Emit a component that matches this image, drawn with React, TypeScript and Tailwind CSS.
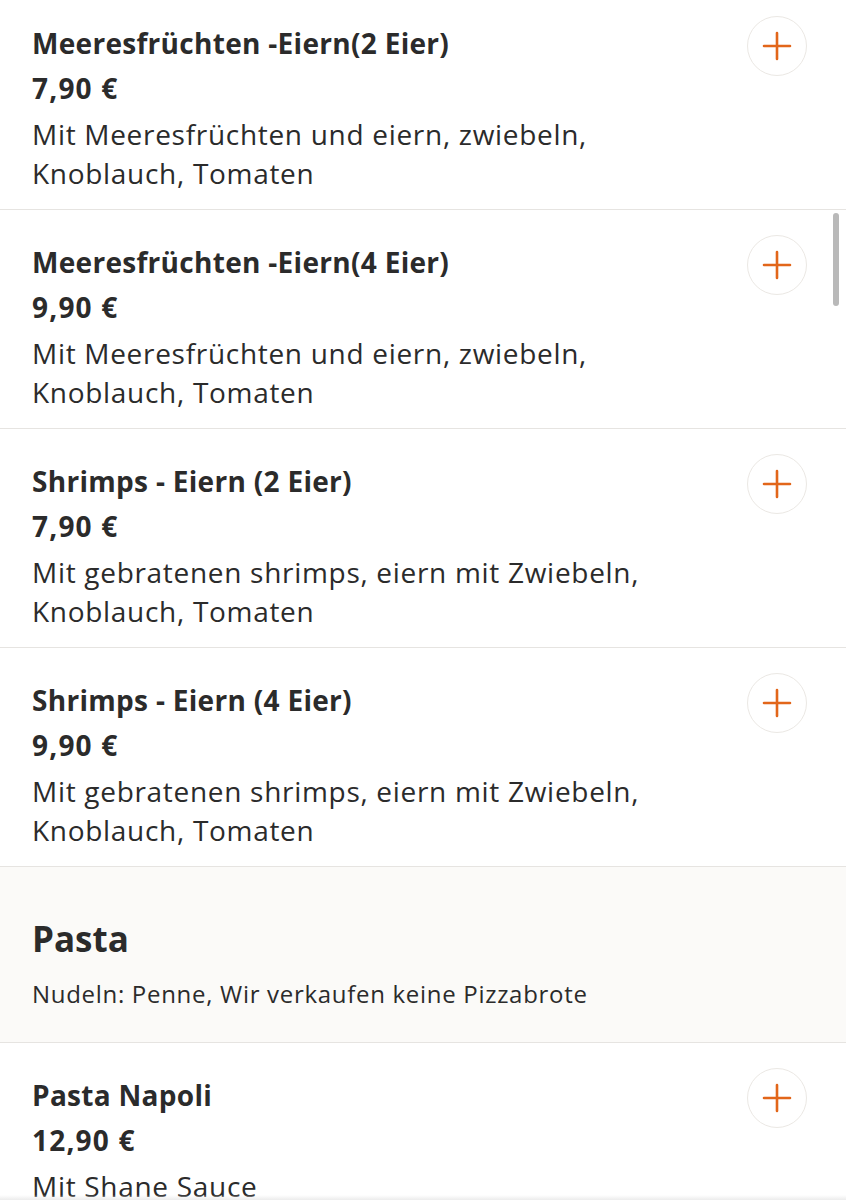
import React from 'react';

interface Item {
  name: string;
  price: string;
  desc: string[];
}

const eier: Item[] = [
  { name: 'Meeresfrüchten -Eiern(2 Eier)', price: '7,90 €', desc: ['Mit Meeresfrüchten und eiern, zwiebeln,', 'Knoblauch, Tomaten'] },
  { name: 'Meeresfrüchten -Eiern(4 Eier)', price: '9,90 €', desc: ['Mit Meeresfrüchten und eiern, zwiebeln,', 'Knoblauch, Tomaten'] },
  { name: 'Shrimps - Eiern (2 Eier)', price: '7,90 €', desc: ['Mit gebratenen shrimps, eiern mit Zwiebeln,', 'Knoblauch, Tomaten'] },
  { name: 'Shrimps - Eiern (4 Eier)', price: '9,90 €', desc: ['Mit gebratenen shrimps, eiern mit Zwiebeln,', 'Knoblauch, Tomaten'] },
];

const PlusButton: React.FC = () => (
  <button className="w-[60px] h-[60px] shrink-0 rounded-full border border-[#ebe8e4] bg-white flex items-center justify-center">
    <svg width="32" height="32" viewBox="0 0 32 32" fill="none">
      <path d="M16 3v26M3 16h26" stroke="#e2661a" strokeWidth="2.6" strokeLinecap="round" />
    </svg>
  </button>
);

const MenuItem: React.FC<{ item: Item }> = ({ item }) => (
  <div className="flex justify-between pl-8 pr-[39px] pt-[25px] pb-[16px] border-b border-[#e6e4e1]">
    <div className="flex flex-col pt-[9px] text-[#2b2b2b]">
      <div className="text-[28px] leading-[36px] font-bold tracking-[0.3px]">{item.name}</div>
      <div className="text-[28px] leading-[36px] font-bold mt-[9px] tracking-[1.2px]">{item.price}</div>
      <div className="text-[28px] leading-[39px] mt-[9px] tracking-[0.7px]">
        {item.desc.map((l) => (
          <div key={l}>{l}</div>
        ))}
      </div>
    </div>
    <PlusButton />
  </div>
);

export default function App() {
  return (
    <div className="relative w-[846px] h-[1200px] overflow-hidden bg-white font-['Open_Sans',sans-serif]">
      <div className="-mt-[9px]">
        {eier.map((it) => (
          <MenuItem key={it.name} item={it} />
        ))}
        <div className="bg-[#fbfaf8] pl-8 pt-[50px] pb-[33px] border-b border-[#e6e4e1] text-[#2b2b2b]">
          <div className="text-[35px] leading-[44px] font-bold">Pasta</div>
          <div className="text-[24px] leading-[30px] mt-[18px] tracking-[0.7px]">Nudeln: Penne, Wir verkaufen keine Pizzabrote</div>
        </div>
        <MenuItem item={{ name: 'Pasta Napoli', price: '12,90 €', desc: ['Mit Shane Sauce'] }} />
      </div>
      <div className="absolute right-[7px] top-[213px] w-[6px] h-[93px] rounded-full bg-[#b9b9b9]" />
      <div className="absolute left-0 right-0 bottom-0 h-[5px] bg-gradient-to-t from-[#ececec] to-transparent" />
    </div>
  );
}
